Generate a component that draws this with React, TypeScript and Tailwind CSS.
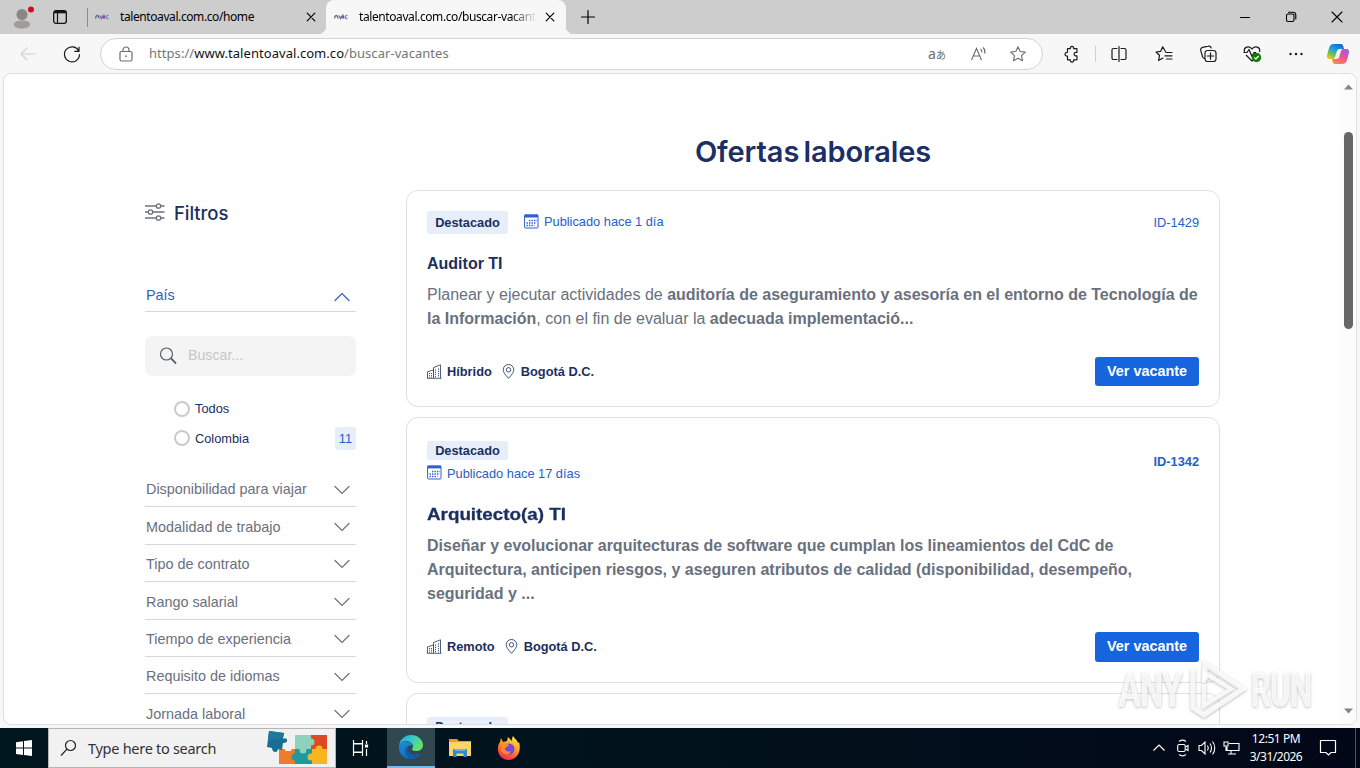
import React from "react";

type IconProps = { d: string; className?: string; size?: number; sw?: number };

const Stroke = ({ d, className = "", size = 20, sw = 1.2 }: IconProps) => (
  <svg width={size} height={size} viewBox="0 0 20 20" fill="none" stroke="currentColor" strokeWidth={sw} strokeLinecap="round" strokeLinejoin="round" className={"shrink-0 " + className}>
    <path d={d} />
  </svg>
);

const CLOSE = "M6.200 6.200l7.600 7.600M13.800 6.200l-7.600 7.600";

const Favicon = () => (
  <svg width="14" height="8" viewBox="0 0 14 8" fill="none" strokeWidth="1.300" className="shrink-0">
    <path d="M0.500 5.500C1 1.500 3.500 1.500 4 5.500" stroke="#3f7390" />
    <path d="M5 2.500L6.500 5.500L8 2.500" stroke="#c04b86" />
    <path d="M8 5.500L9 2.500L10 5.500" stroke="#4c61b8" />
    <path d="M13.500 2.500C10.500 2 10.500 6 13.500 5.500" stroke="#8a7fae" />
  </svg>
);

const TabStrip = () => (
  <div className="flex h-[34px] w-full shrink-0 bg-[#cdcdcd] text-[12px] text-black">
    <div className="flex w-[87px] items-center pl-[12px]">
      <svg width="22" height="28" viewBox="0 0 22 28" className="shrink-0">
        <circle cx="10" cy="11.500" r="5.500" fill="#8b8784" />
        <path d="M2 22c0-3.500 3-4.500 8-4.500s8 1 8 4.500c0 2-4 3.500-8 3.500s-8-1.500-8-3.500z" fill="#a09c99" />
        <circle cx="19" cy="6.500" r="3" fill="#d40b1f" />
      </svg>
      <svg width="14" height="14" viewBox="0 0 14 14" fill="none" stroke="#111" strokeWidth="1.300" className="ml-[19px] shrink-0">
        <rect x="0.700" y="0.700" width="12.600" height="12.600" rx="2.200" />
        <path d="M1 2h12" strokeWidth="2.600" />
        <path d="M4.500 3v10" strokeWidth="1.200" />
      </svg>
    </div>
    <div className="mt-[8px] h-[19px] w-px bg-[#8b8b8b]" />
    <div className="flex w-[238px] items-center pl-[7px]">
      <Favicon />
      <span className="ml-[11px] w-[178px] whitespace-nowrap tracking-[-0.410px]">talentoaval.com.co/home</span>
      <Stroke d={CLOSE} size={20} className="ml-[3px]" sw={1.2} />
    </div>
    <div className="relative flex w-[240px] items-center rounded-t-[8px] bg-[#f7f7f7] pl-[8px]">
      <div className="absolute bottom-0 left-[-8px] h-[8px] w-[8px] bg-[radial-gradient(circle_at_0_0,#cdcdcd_8px,#f7f7f7_8.5px)]" />
      <div className="absolute right-[-8px] bottom-0 h-[8px] w-[8px] bg-[radial-gradient(circle_at_100%_0,#cdcdcd_8px,#f7f7f7_8.5px)]" />
      <Favicon />
      <span className="ml-[11px] w-[178px] whitespace-nowrap bg-gradient-to-r from-black from-85% to-transparent bg-clip-text tracking-[-0.410px] text-transparent">talentoaval.com.co/buscar-vacant</span>
      <Stroke d={CLOSE} size={20} className="ml-[3px]" sw={1.2} />
    </div>
    <div className="flex flex-1 items-center pl-[15px]">
      <Stroke d="M10 3.500v13M3.500 10h13" size={20} className="ml-[-3px]" sw={1.2} />
    </div>
    <div className="flex items-center">
      <Stroke d="M5.500 10.500h9" size={20} className="mr-[26px]" sw={1.1} />
      <Stroke d="M5.500 8.500a1.500 1.500 0 0 1 1.500-1.500h4.500a1.500 1.500 0 0 1 1.500 1.500v4.500a1.500 1.500 0 0 1-1.500 1.500h-4.500a1.500 1.500 0 0 1-1.500-1.500zM7.500 5.200h4.500a2.800 2.800 0 0 1 2.800 2.800v4" size={20} className="mr-[26px]" sw={1.1} />
      <Stroke d="M5 5l10 10M15 5l-10 10" size={20} className="mr-[13px]" sw={1.1} />
    </div>
  </div>
);

const STAR = "M10 2.800l2.200 4.700 5.100.6-3.800 3.500 1 5.100-4.500-2.500-4.500 2.500 1-5.100-3.800-3.500 5.100-.6z";

const Copilot = () => (
  <svg width="24" height="24" viewBox="0 0 24 24" className="shrink-0">
    <defs>
      <linearGradient id="cpa" x1="0.700" y1="0" x2="0.200" y2="1">
        <stop offset="0" stopColor="#1667d9" />
        <stop offset="0.450" stopColor="#22a7d8" />
        <stop offset="0.700" stopColor="#6fc14b" />
        <stop offset="1" stopColor="#f3c61d" />
      </linearGradient>
      <linearGradient id="cpb" x1="0.800" y1="0" x2="0.200" y2="1">
        <stop offset="0" stopColor="#a25be8" />
        <stop offset="0.450" stopColor="#e9549c" />
        <stop offset="1" stopColor="#ff8a3c" />
      </linearGradient>
    </defs>
    <path d="M8 2h7c2 0 2 1.500 2.500 3l.6 2H14c-2 0-2.800 1-3.300 2.800L9 15c-.5 1.500-1 2-2.500 2H4c-3 0-3.500-2-2.800-4.500l2-7C4 3 5.500 2 8 2z" fill="url(#cpa)" />
    <path d="M16 22H9c-2 0-2-1.500-2.500-3L6 17h4c2 0 2.800-1 3.300-2.800L15 9c.5-1.500 1-2 2.500-2H20c3 0 3.500 2 2.800 4.500l-2 7C20 21 18.500 22 16 22z" fill="url(#cpb)" />
  </svg>
);

const Toolbar = () => (
  <div className="flex h-[39px] w-full shrink-0 items-center bg-[#f7f7f7] text-[#1b1b1b]">
    <Stroke d="M17 10H3M9 4l-6 6 6 6" size={20} className="ml-[18px] text-[#cfcfcf]" sw={1.1} />
    <Stroke d="M16.800 7.200A7.500 7.500 0 1 0 17.500 10.500M17 3.200v4.200h-4.200" size={20} className="ml-[24px]" sw={1.2} />
    <div className="ml-[18px] flex h-[32px] w-[943px] items-center rounded-full border border-[#d3d3d3] bg-white text-[#6d6d6d]">
      <svg width="14" height="16" viewBox="0 0 14 16" fill="none" stroke="currentColor" strokeWidth="1.200" className="ml-[18px] shrink-0">
        <rect x="1" y="5.500" width="12" height="9.500" rx="1.500" />
        <path d="M4 5.500V4a3 3 0 0 1 6 0v1.500" />
        <circle cx="7" cy="10.200" r="0.900" fill="currentColor" stroke="none" />
      </svg>
      <span className="ml-[16px] w-[779px] whitespace-nowrap text-[13px] tracking-[0.050px] text-[#767676]">
        https://<span className="text-[#111]">www.talentoaval.com.co</span>/buscar-vacantes
      </span>
      <div className="flex w-[18px] items-baseline justify-center whitespace-nowrap text-[14px] leading-none">a<span className="font-['Noto_Sans_CJK_JP',sans-serif] text-[10px]">あ</span></div>
      <svg width="18" height="18" viewBox="0 0 18 18" fill="none" stroke="currentColor" strokeWidth="1.100" className="ml-[24px] shrink-0">
        <path d="M1.500 15L6.500 3.500L11.500 15M3.300 11h6.500M10.500 4c1.200.8 1.500 2 1.400 3.500M13 2.500c1.800 1.500 2.200 3.500 1.800 6" />
      </svg>
      <Stroke d={STAR} size={20} className="ml-[20px]" sw={1.1} />
    </div>
    <Stroke d="M5 4h3.200a1.900 1.900 0 1 1 3.600 0H15.500v4.300h-.8a1.900 1.900 0 1 0 0 3.700h.8V16.500H11.800a1.900 1.900 0 1 1-3.600 0H5v-4.300a2.100 2.100 0 1 1 0-4z" size={18} className="ml-[20px]" sw={1.3} />
    <div className="ml-[14px] h-[16px] w-px bg-[#cfcfcf]" />
    <Stroke d="M8 4.500h-3.500A1.500 1.500 0 0 0 3 6v8a1.500 1.500 0 0 0 1.500 1.500h3.500M12 4.500h3.500A1.500 1.500 0 0 1 17 6v8a1.500 1.500 0 0 1-1.500 1.500h-3.500M10 2.500v15" size={20} className="ml-[13px]" sw={1.2} />
    <Stroke d="M11.500 7.500L8.700 2.800 6.700 7.300 2 8l3.500 3.300-.9 5.200 4.300-2.400M12 8.500h6M11 11.800h7M12.500 15h5.500" size={20} className="ml-[25px]" sw={1.2} />
    <Stroke d="M6.500 14.500a2.500 2.500 0 0 1-2-2L2.700 6.300a2.500 2.500 0 0 1 2-3l5.500-1.100a2.500 2.500 0 0 1 3 1.800M9 6.500h6.500a2.500 2.500 0 0 1 2.500 2.500v6a2.500 2.500 0 0 1-2.500 2.500H9.500A2.500 2.500 0 0 1 7 15V9a2.500 2.500 0 0 1 2-2.500M12.500 8.800v6.400M9.300 12h6.400" size={20} className="ml-[24px]" sw={1.2} />
    <svg width="22" height="20" viewBox="0 0 22 20" fill="none" stroke="currentColor" strokeWidth="1.200" strokeLinejoin="round" className="ml-[24px] shrink-0">
      <path d="M2.500 8C1 3 7.500 1 10 5c2.500-4 9-2 7.500 3M1.500 8.500H5L7 5.500l3 7 2-4h2M4 11l6 6 2-1.500" />
      <circle cx="14.500" cy="13.500" r="4.700" fill="#107c10" stroke="none" />
      <path d="M12.300 13.500l1.500 1.500 2.800-3" stroke="white" />
    </svg>
    <svg width="16" height="4" viewBox="0 0 16 4" fill="currentColor" className="ml-[24px] shrink-0">
      <circle cx="2.500" cy="2" r="1.200" /><circle cx="8" cy="2" r="1.200" /><circle cx="13.500" cy="2" r="1.200" />
    </svg>
    <div className="ml-[22px]"><Copilot /></div>
  </div>
);

const Chevron = ({ up = false }: { up?: boolean }) => (
  <svg width="16" height="10" viewBox="0 0 16 10" fill="none" stroke="currentColor" strokeWidth="1.200" strokeLinecap="round" className="mr-[6px] shrink-0">
    <path d={up ? "M1 8.500L8 1.500L15 8.500" : "M1 1.500L8 8.500L15 1.500"} />
  </svg>
);

const FILTERS = ["Disponibilidad para viajar", "Modalidad de trabajo", "Tipo de contrato", "Rango salarial", "Tiempo de experiencia", "Requisito de idiomas", "Jornada laboral"];

const Sidebar = () => (
  <aside className="w-[211px] shrink-0 pt-[126px]">
    <div className="flex h-[28px] items-center">
      <svg width="20" height="18" viewBox="0 0 20 18" fill="white" stroke="#69707e" strokeWidth="1.300" className="mt-[-4px] shrink-0">
        <path d="M0 3h19.500M0 9h19.500M0 15h19.500" />
        <circle cx="13.500" cy="3" r="2.200" /><circle cx="5.500" cy="9" r="2.200" /><circle cx="13.500" cy="15" r="2.200" />
      </svg>
      <h2 className="ml-[9px] font-['Inter',sans-serif] text-[18.500px] font-medium tracking-[-0.060px] text-[#1b2f5e]">Filtros</h2>
    </div>
    <div className="mt-[50px] flex h-[34px] items-center justify-between border-b border-[#d5d8dc] pt-[2px] text-[14.4px] text-[#2b5fc4]">
      <span className="pl-px">País</span>
      <span className="pt-[2px]"><Chevron up /></span>
    </div>
    <div className="mt-[24px] flex h-[40px] items-center rounded-[7px] bg-[#f4f4f4] pl-[14px]">
      <svg width="18" height="18" viewBox="0 0 18 18" fill="none" stroke="#596068" strokeWidth="1.200">
        <circle cx="7.500" cy="7" r="6" /><path d="M11.800 11.200L17 16.500" strokeWidth="1.800" />
      </svg>
      <span className="ml-[11px] text-[14.2px] text-[#c4c6c9]">Buscar...</span>
    </div>
    <div className="mt-[18px] text-[12.8px] text-[#1b2f5e]">
      {["Todos", "Colombia"].map((name) => (
        <div key={name} className="flex h-[29.500px] items-center pl-[29px]">
          <span className="h-[16px] w-[16px] rounded-full border-2 border-[#cbcbcb] bg-white" />
          <span className="ml-[5px]">{name}</span>
          {name === "Colombia" && <span className="ml-auto flex h-[23px] w-[21px] items-center justify-center rounded-[3px] bg-[#e6eefa] text-[#2560c8]">11</span>}
        </div>
      ))}
    </div>
    <div className="mt-[17px] text-[14.4px] text-[#69707e]">
      {FILTERS.map((f) => (
        <div key={f} className="flex h-[37.400px] items-center justify-between border-b border-[#d5d8dc] pt-[4px]">
          <span className="whitespace-nowrap pl-px">{f}</span>
          <span className="pb-[1px]"><Chevron /></span>
        </div>
      ))}
    </div>
  </aside>
);

const Calendar = () => (
  <svg width="15" height="15" viewBox="0 0 15 15" fill="none" stroke="#2a62cf" className="shrink-0">
    <rect x="0.600" y="1" width="13.400" height="13" rx="0.800" />
    <path d="M0.500 2h13.500" strokeWidth="2.800" />
    <path d="M5 6.500h8M2.500 9h10M2.500 11.500h8" strokeWidth="1.400" strokeDasharray="1.400 1.100" />
  </svg>
);

const Building = () => (
  <svg width="15" height="15" viewBox="0 0 15 15" fill="none" stroke="#3c4e74" className="mt-[-2px] shrink-0">
    <path d="M0.500 14.200V7.800L6.500 6v8M6.500 14.200V3.500L13.500 0.800V14.200M0 14.300h14.500" strokeWidth="0.900" />
    <path d="M8.500 5.500v8M11.500 4.500v9M2.500 9v5M4.500 9v5" strokeDasharray="1.200 1" />
  </svg>
);

const Pin = () => (
  <svg width="13" height="15" viewBox="0 0 13 15" fill="none" stroke="#2d4067" strokeWidth="0.900" className="mt-[-2px] shrink-0">
    <path d="M6.500 14.300C3 10.500 1.200 8 1.200 5.800a5.300 5.300 0 0 1 10.600 0C11.800 8 10 10.500 6.500 14.300z" />
    <circle cx="6.500" cy="5.800" r="2.200" />
  </svg>
);

const Badge = ({ className }: { className: string }) => (
  <span className={"flex w-[81px] shrink-0 items-center justify-center rounded-[3px] bg-[#e6eefa] text-[12.8px] font-bold text-[#1b2f5e] " + className}>Destacado</span>
);

const JobFooter = ({ mode, buttonClass }: { mode: string; buttonClass: string }) => (
  <div className="flex h-[30px] items-start text-[12.8px] font-bold text-[#1b2f5e]">
    <div className="flex h-[30px] items-center">
      <Building />
      <span className="ml-[5px] mr-[10px]">{mode}</span>
      <Pin />
      <span className="ml-[6px]">Bogotá D.C.</span>
    </div>
    <button className={"ml-auto w-[104px] whitespace-nowrap rounded-[3px] bg-[#1765de] text-[14.4px] font-bold text-white " + buttonClass}>Ver vacante</button>
  </div>
);

const Jobs = () => (
  <main className="ml-[50px] w-[814px] shrink-0">
    <h1 className="mt-[60px] h-[36px] text-center font-['Inter',sans-serif] text-[29px] font-semibold leading-[36px] tracking-[-0.100px] text-[#1b2f66] [word-spacing:-3px]">Ofertas laborales</h1>

    <article className="mt-[20px] h-[217px] rounded-[12px] border border-[#dee0e3] px-[20px] pt-[19px]">
      <div className="flex h-[25px] items-center text-[12.8px] text-[#2560c8]">
        <Badge className="h-[23px]" />
        <span className="ml-[16px] mt-[-2px] flex items-center"><Calendar /><span className="ml-[5px]">Publicado hace 1 día</span></span>
        <span className="ml-auto">ID-1429</span>
      </div>
      <h3 className="mt-[17px] text-[16px] font-bold leading-[24px] text-[#1b2f5e]">Auditor TI</h3>
      <p className="mt-[7px] whitespace-nowrap text-[16px] leading-[24px] text-[#69707e]">
        Planear y ejecutar actividades de <b>auditoría de aseguramiento y asesoría en el entorno de Tecnología de</b>
        <br />
        <b>la Información</b>, con el fin de evaluar la <b>adecuada implementació...</b>
      </p>
      <div className="mt-[26px]"><JobFooter mode="Híbrido" buttonClass="h-[29px]" /></div>
    </article>

    <article className="mt-[10px] h-[266px] rounded-[12px] border border-[#dee0e3] px-[20px] pt-[23px]">
      <div className="flex items-center justify-between text-[12.8px] text-[#2560c8]">
        <div>
          <Badge className="h-[19px]" />
          <span className="mt-[3px] flex h-[20px] items-center"><span className="mt-[-2px]"><Calendar /></span><span className="ml-[5px] pt-px">Publicado hace 17 días</span></span>
        </div>
        <span className="font-bold">ID-1342</span>
      </div>
      <h3 className="mt-[20px] w-[118px] origin-left scale-x-[1.175] whitespace-nowrap text-[16px] font-bold leading-[24px] text-[#1b2f5e] [-webkit-text-stroke:0.3px_#1b2f5e]">Arquitecto(a) TI</h3>
      <p className="mt-[7px] whitespace-nowrap text-[16px] font-bold leading-[24px] text-[#69707e]">
        Diseñar y evolucionar arquitecturas de software que cumplan los lineamientos del CdC de<br />
        Arquitectura, anticipen riesgos, y aseguren atributos de calidad (disponibilidad, desempeño,<br />
        seguridad y ...
      </p>
      <div className="mt-[26px]"><JobFooter mode="Remoto" buttonClass="h-[30px]" /></div>
    </article>

    <article className="mt-[10px] h-[217px] rounded-[12px] border border-[#dee0e3] px-[20px] pt-[23px]">
      <Badge className="h-[19px]" />
    </article>
  </main>
);

const Watermark = () => (
  <svg width="204" height="70" viewBox="0 0 204 70" className="absolute bottom-[43px] left-[1114px] drop-shadow-[0_1px_1.5px_rgba(0,0,0,0.3)]">
    <g fill="#ffffff" fillOpacity="0.800" stroke="#ffffff" strokeOpacity="0.800" strokeWidth="1.200">
      <text x="5" y="51" fontFamily="Roboto, sans-serif" fontSize="46" fontWeight="500" textLength="63" lengthAdjust="spacingAndGlyphs">ANY</text>
      <text x="137" y="51" fontFamily="Roboto, sans-serif" fontSize="46" fontWeight="500" textLength="61" lengthAdjust="spacingAndGlyphs">RUN</text>
    </g>
    <g fill="none" stroke="#ffffff" strokeOpacity="0.850" strokeWidth="5">
      <path d="M79 14v39l11 7 39-26L91 9v16" />
      <path d="M90 52V29l0 22 27-17-27-16v10" strokeWidth="4" />
    </g>
  </svg>
);

const Puzzle = () => (
  <svg width="64" height="38" viewBox="0 0 64 38" className="shrink-0">
    <path d="M14 20h17v15H14z" fill="#ed7b2d" />
    <path d="M30 6h16v15H30z" fill="#8ed1bd" />
    <path d="M46 6h16v15H46z" fill="#df4b20" />
    <path d="M30 20h17v15H30z" fill="#1d9a9d" />
    <path d="M47 20h15v15H47z" fill="#f8b421" />
    <circle cx="38" cy="21" r="3.500" fill="#8ed1bd" />
    <circle cx="46" cy="13" r="3.500" fill="#8ed1bd" />
    <circle cx="30" cy="28" r="3.500" fill="#1d9a9d" />
    <circle cx="54" cy="20" r="3.500" fill="#f8b421" />
    <circle cx="46" cy="28" r="3.500" fill="#f8b421" />
    <path d="M20 20c0-4 6-5 7-1l-1 3h-6z" fill="#f1f1f1" />
    <path d="M4 2l15 2-1 6c5-3 6 5 0 4l-1 7-4-1c0 4-6 4-6-1l-5-1z" fill="#166e92" />
    <path d="M4 2l15 2-1 5L3 12z" fill="#1f7899" />
  </svg>
);

const EdgeLogo = () => (
  <svg width="26" height="26" viewBox="0 0 26 26">
    <defs>
      <linearGradient id="eg" x1="0" y1="0" x2="1" y2="0.500"><stop offset="0" stopColor="#259fe0" /><stop offset="0.500" stopColor="#35c8ca" /><stop offset="1" stopColor="#66e267" /></linearGradient>
      <linearGradient id="eb" x1="0" y1="0" x2="0.700" y2="1"><stop offset="0" stopColor="#1b91df" /><stop offset="1" stopColor="#1261b0" /></linearGradient>
    </defs>
    <path d="M1 12C2 5 7 1 13 1c7 0 12 5 12 10 0 4-3 6-7 6-3 0-4-1-4-2 0-.8 1-1 1-3 0-3-4-5-7-5-4 0-6 3-7 5z" fill="url(#eg)" />
    <path d="M1 12c1-3 4-4.500 7-4.500 4 0 6.500 2 7 4-4-1-6 1-6 4 0 5 6 6.500 13 4.500C20 23.500 17 25 13 25 5 25 .5 19 1 12z" fill="url(#eb)" />
    <path d="M9.500 12C8 18 13 23 22.500 19.500 20 23 17 25 13 25 7 23 5 16 9.500 12z" fill="#0f5da9" />
  </svg>
);

const FolderLogo = () => (
  <svg width="22" height="20" viewBox="0 0 22 20">
    <path d="M0 1h8l2 2h12v4H0z" fill="#e6a01e" />
    <path d="M0 4h22v14H0z" fill="#fcd567" />
    <path d="M4 11h14v8h-3.500v-3.500h-7V19H4z" fill="#3189ca" />
    <path d="M5.500 11h11v2h-11z" fill="#68b4e5" />
  </svg>
);

const FirefoxLogo = () => (
  <svg width="24" height="25" viewBox="0 0 24 25">
    <defs><linearGradient id="ff" x1="0.800" y1="0" x2="0.300" y2="1"><stop offset="0" stopColor="#fff04a" /><stop offset="0.400" stopColor="#ffa425" /><stop offset="0.750" stopColor="#ff5634" /><stop offset="1" stopColor="#ed2366" /></linearGradient></defs>
    <path d="M4 2l2 4 4-1 1-4 4 4c0-2 0-3 1-5 2 3 4 4 5 7l1-1c2 7 0 12-3 15-4 4-11 4-15 0C0 17 0 10 3 6z" fill="url(#ff)" />
    <circle cx="12" cy="13" r="5.500" fill="#7748dc" />
    <path d="M5 9c3-2 5-1 7 0-1 2-4 2-4 4 1 3 4 3 6 2-2 5-9 4-10-1z" fill="#ff8c28" />
  </svg>
);

const Taskbar = () => (
  <div className="flex h-[40px] w-full shrink-0 items-center bg-gradient-to-r from-[#00161f] via-[#01121c] to-[#020718] text-white">
    <div className="flex w-[48px] justify-center">
      <svg width="16" height="16" viewBox="0 0 16 16" fill="white"><path d="M0 2.300l7-1V7.600H0zM8 1.100L16 0v7.600H8zM0 8.600h7v6.300l-7-1zM8 8.600h8V16l-8-1.100z" /></svg>
    </div>
    <div className="flex h-[40px] w-[288px] items-center border border-[#b5b5b5] bg-[#f1f1f1]">
      <svg width="18" height="18" viewBox="0 0 18 18" fill="none" stroke="#222" strokeWidth="1.200" className="ml-[11px] shrink-0"><circle cx="10.500" cy="6.500" r="5" /><path d="M7 10.100L1 16.500" /></svg>
      <span className="ml-[10px] w-[177px] whitespace-nowrap pt-[2px] text-[14.500px] tracking-[-0.280px] text-[#333]">Type here to search</span>
      <Puzzle />
    </div>
    <div className="flex w-[51px] justify-center pr-[4px]">
      <svg width="18" height="16" viewBox="0 0 18 16" fill="none" stroke="white" strokeWidth="1.200"><path d="M2.500 0v3.500h9V0M2.500 16v-3.500h9V16M2.500 4h9v8h-9zM15.500 1v3M15.500 9v7" /><path d="M14.500 5h2v2h-2z" fill="white" /></svg>
    </div>
    <div className="flex h-[40px] w-[48px] items-center justify-center border-b-2 border-[#76b9ed] bg-[#314850]"><EdgeLogo /></div>
    <div className="flex w-[49px] justify-center"><FolderLogo /></div>
    <div className="flex w-[49px] justify-center"><FirefoxLogo /></div>
    <div className="ml-auto flex h-full items-center">
      <svg width="12" height="8" viewBox="0 0 12 8" fill="none" stroke="white" strokeWidth="1.200"><path d="M0.500 6.500L6 1L11.500 6.500" /></svg>
      <svg width="12" height="18" viewBox="0 0 12 18" fill="none" stroke="white" strokeWidth="1.100" className="ml-[12px]"><rect x="0.700" y="5.500" width="7.500" height="7" rx="1.500" /><path d="M8.500 8l2.500-1.500v5L8.500 10M2 2.500c2-1.500 5-1.500 7 0M2 15.500c2 1.500 5 1.500 7 0" /></svg>
      <svg width="18" height="16" viewBox="0 0 18 16" fill="none" stroke="white" strokeWidth="1.100" className="ml-[9px]"><path d="M1 5.500h2.500L7 2v12L3.500 10.500H1zM9.500 5.500c1 1.500 1 3.500 0 5M12 3.500c2 2.500 2 6.500 0 9M14.500 1.500c3 3.500 3 9.500 0 13" /></svg>
      <svg width="18" height="16" viewBox="0 0 18 16" fill="none" stroke="white" strokeWidth="1.100" className="ml-[7px]"><path d="M6 3.500h10v7H4V7M8 10.500v3.500M5 14h8M1 2h4v4H1zM3 6v5" /></svg>
      <div className="w-[70px] text-center text-[12px] leading-[18px] tracking-[-0.450px]"><div>12:51 PM</div><div className="tracking-[-0.500px]">3/31/2026</div></div>
      <svg width="18" height="18" viewBox="0 0 18 18" fill="none" stroke="white" strokeWidth="1.200" className="ml-[8px]"><path d="M1.500 1.500h15v12H12L9.500 16 7 13.500H1.500z" /></svg>
      <div className="ml-[18px] mr-[4px] h-full w-px bg-[#4a5663]" />
    </div>
  </div>
);

export default function App() {
  return (
    <div className="relative flex h-[768px] w-[1360px] flex-col overflow-hidden bg-[#f7f7f7] font-['Noto_Sans',sans-serif]">
      <TabStrip />
      <Toolbar />
      <div className="mb-[3px] ml-[3px] flex h-[652px] w-[1354px] overflow-hidden rounded-[8px] border border-[#dfdfdf] bg-white font-['Liberation_Sans',Arial,sans-serif]">
        <div className="flex h-[650px] w-[1337px] overflow-hidden pl-[141px]">
          <Sidebar />
          <Jobs />
        </div>
        <div className="flex h-full w-[15px] flex-col items-center bg-[#fcfcfc] py-[10px]">
          <svg width="9" height="6" viewBox="0 0 9 6" fill="#858585" className="shrink-0"><path d="M0 5.500L4.500 0.500L9 5.500z" /></svg>
          <div className="mt-[42px] h-[197px] w-[9px] shrink-0 rounded-full bg-[#666666]" />
          <svg width="9" height="6" viewBox="0 0 9 6" fill="#858585" className="mt-auto shrink-0"><path d="M0 0.500L4.500 5.500L9 0.500z" /></svg>
        </div>
      </div>
      <Taskbar />
      <Watermark />
    </div>
  );
}
